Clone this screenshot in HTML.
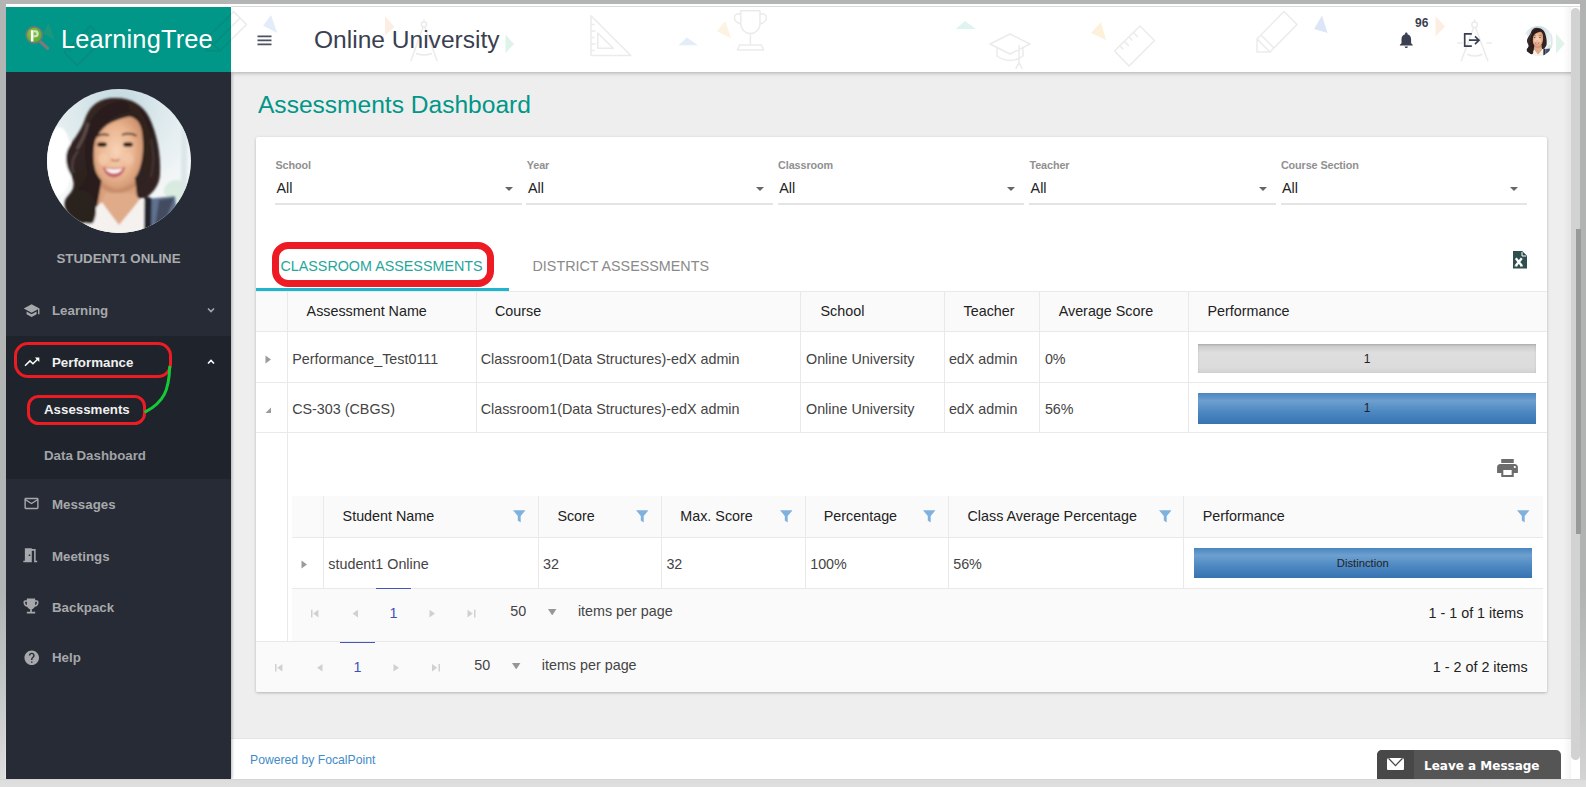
<!DOCTYPE html>
<html lang="en">
<head>
<meta charset="utf-8">
<title>Assessments Dashboard</title>
<style>
*{box-sizing:border-box;margin:0;padding:0}
html,body{width:1586px;height:787px;overflow:hidden;background:#eeeeee;font-family:"Liberation Sans",Arial,sans-serif}
body{position:relative}
.abs{position:absolute}
.bd{position:absolute;background:#b3b5b4;z-index:50}
/* sidebar */
#side{position:absolute;left:6px;top:72px;width:225px;height:707px;background:#272b35;box-shadow:1px 0 3px rgba(0,0,0,.28)}
#brand{position:absolute;left:6px;top:7px;width:225px;height:65px;background:#009688;overflow:hidden}
#brand .name{position:absolute;left:54.900px;top:16.700px;letter-spacing:.15px;font-size:25.4px;color:#fff;white-space:nowrap;line-height:30px}
#uname{position:absolute;left:6px;width:225px;top:251.100px;text-align:center;font-size:13.3px;font-weight:bold;color:#a9abae;line-height:16px}
.mi{position:absolute;left:52px;color:#a6a8ab;font-size:13.3px;font-weight:bold;line-height:16px;white-space:nowrap}
#sub{position:absolute;left:6px;top:335.500px;width:225px;height:143px;background:#1f232b}
.smi{position:absolute;left:44px;font-size:13.3px;font-weight:bold;color:#a2a4a8;line-height:16px;white-space:nowrap}
/* top bar */
#top{position:absolute;left:231px;top:4px;width:1349px;height:68px;background:#fff;box-shadow:0 1px 4px rgba(0,0,0,.28);overflow:hidden}
#toptitle{position:absolute;left:314px;top:24.5px;font-size:24.55px;color:#3a3f51;line-height:30px;white-space:nowrap}
#ptitle{position:absolute;left:258px;top:89.5px;font-size:24.55px;color:#009688;line-height:30px;white-space:nowrap}
/* card */
#card{position:absolute;left:256px;top:137px;width:1290.500px;height:555px;background:#fff;box-shadow:0 1px 3px rgba(0,0,0,.25);border-radius:2px}
.flab{position:absolute;top:157.600px;font-size:10.8px;font-weight:bold;color:#909090;line-height:14px;letter-spacing:-.1px}
.fval{position:absolute;top:179.3px;font-size:14.33px;color:#222;line-height:18px}
.fline{position:absolute;top:203px;height:2px;width:246.5px;background:#e4e4e4}
.farr{position:absolute;top:187px;width:0;height:0;border-left:4.5px solid transparent;border-right:4.5px solid transparent;border-top:4.5px solid #666}
.tab{position:absolute;top:256.9px;font-size:14.33px;line-height:18px;white-space:nowrap}
/* grid */
.g{position:absolute;font-size:14.33px;color:#444;line-height:18px;white-space:nowrap}
.gh{position:absolute;font-size:14.33px;color:#222;line-height:18px;white-space:nowrap}
.vl{position:absolute;width:1px;background:#e9e9e9}
.hl{position:absolute;height:1px;background:#e9e9e9}
.hbg{position:absolute;background:#fafafa}
.bar{position:absolute;text-align:center;font-size:11.25px;line-height:30px;color:#222}
.bar.blue{background:linear-gradient(#4a86c0 0%,#6da0cf 25%,#4d88c2 60%,#3773b0 100%)}
.bar.grey{background:linear-gradient(#c6c6c6 0%,#dedede 30%,#dcdcdc 80%,#d2d2d2 100%);box-shadow:inset 0 1px 2px rgba(0,0,0,.15)}
.pg{position:absolute;font-size:14.33px;color:#444;line-height:18px;white-space:nowrap}
#foot{position:absolute;left:231px;top:738px;width:1349px;height:41px;background:#fff;border-top:1px solid #e4e4e4}
#foot span{position:absolute;left:19px;top:13.500px;font-size:12.2px;color:#428bca;line-height:14px}
#lam{position:absolute;left:1377px;top:750px;width:184px;height:29px;background:#555;border-radius:5px 5px 0 0;overflow:hidden}
#lam i{position:absolute;left:0;top:0;width:37px;height:29px;background:#484848}
#lam span{position:absolute;left:47px;top:7.500px;font-family:"DejaVu Sans","Liberation Sans",sans-serif;font-weight:bold;font-size:12px;color:#fff;line-height:16px;white-space:nowrap}
</style>
</head>
<body>
<!-- CONTENT -->
<div id="ptitle">Assessments Dashboard</div>
<div id="card"></div>
<!--CARD-CONTENT-->
<!-- filters -->
<div class="flab" style="left:275.4px">School</div><div class="fval" style="left:276.5px">All</div><div class="fline" style="left:275.0px"></div><div class="farr" style="left:504.7px"></div>
<div class="flab" style="left:526.8px">Year</div><div class="fval" style="left:527.9px">All</div><div class="fline" style="left:526.4px"></div><div class="farr" style="left:756.1px"></div>
<div class="flab" style="left:778.1px">Classroom</div><div class="fval" style="left:779.2px">All</div><div class="fline" style="left:777.7px"></div><div class="farr" style="left:1007.4px"></div>
<div class="flab" style="left:1029.5px">Teacher</div><div class="fval" style="left:1030.6px">All</div><div class="fline" style="left:1029.1px"></div><div class="farr" style="left:1258.8px"></div>
<div class="flab" style="left:1280.9px">Course Section</div><div class="fval" style="left:1282.0px">All</div><div class="fline" style="left:1280.5px"></div><div class="farr" style="left:1510.2px"></div>
<!-- tabs -->
<div class="tab" style="left:280.4px;color:#26a69a">CLASSROOM ASSESSMENTS</div>
<div class="tab" style="left:532.5px;color:#8a8a8a">DISTRICT ASSESSMENTS</div>
<div class="abs" style="left:256px;top:287.5px;width:252.5px;height:3px;background:#1fb5cf"></div>
<div class="abs" style="left:272.2px;top:242px;width:221.4px;height:45px;border:7px solid #ed1c24;border-radius:16px"></div>
<!-- excel icon -->
<svg class="abs" style="left:1513px;top:251px" width="14" height="17.5" viewBox="0 0 14 17.500"><path d="M0 0 H9.200 L14 4.800 V17.500 H0 Z" fill="#2f4f4f"/><path d="M9 1 V5 H13.200" stroke="#fff" stroke-width="1" fill="none"/><path d="M2.800 7.200 L8.800 14.800 M8.800 7.200 L2.800 14.800" stroke="#fff" stroke-width="2.300"/><path d="M1.600 14.900 H4.600 M7 14.900 H10" stroke="#fff" stroke-width="1"/></svg>
<!-- main grid -->
<div class="hbg" style="left:256px;top:290.5px;width:1290.500px;height:41px"></div>
<div class="hl" style="left:256px;top:290.5px;width:1290.500px"></div>
<div class="hl" style="left:256px;top:331px;width:1290.500px"></div>
<div class="hl" style="left:256px;top:381.5px;width:1290.500px"></div>
<div class="hl" style="left:256px;top:431.500px;width:1290.500px"></div>
<div class="vl" style="left:287px;top:291px;height:350px"></div>
<div class="vl" style="left:475.500px;top:291px;height:141px"></div>
<div class="vl" style="left:800px;top:291px;height:141px"></div>
<div class="vl" style="left:944px;top:291px;height:141px"></div>
<div class="vl" style="left:1039px;top:291px;height:141px"></div>
<div class="vl" style="left:1188px;top:291px;height:141px"></div>
<div class="gh" style="left:306.600px;top:301.700px">Assessment Name</div>
<div class="gh" style="left:495px;top:301.700px">Course</div>
<div class="gh" style="left:820.500px;top:301.700px">School</div>
<div class="gh" style="left:963.600px;top:301.700px">Teacher</div>
<div class="gh" style="left:1058.700px;top:301.700px">Average Score</div>
<div class="gh" style="left:1207.500px;top:301.700px">Performance</div>
<!-- row 1 -->
<svg class="abs" style="left:264.500px;top:354.500px" width="7" height="9" viewBox="0 0 7 9"><path d="M0.500 0.500 L6 4.500 L0.500 8.500 Z" fill="#9b9b9b"/></svg>
<div class="g" style="left:292.200px;top:349.700px">Performance_Test0111</div>
<div class="g" style="left:480.700px;top:349.700px">Classroom1(Data Structures)-edX admin</div>
<div class="g" style="left:806px;top:349.700px">Online University</div>
<div class="g" style="left:948.900px;top:349.700px">edX admin</div>
<div class="g" style="left:1044.900px;top:349.700px">0%</div>
<div class="bar grey" style="left:1198px;top:343.500px;width:338px;height:29.500px;font-size:12px">1</div>
<!-- row 2 -->
<svg class="abs" style="left:264.500px;top:407px" width="7" height="7" viewBox="0 0 7 7"><path d="M6 0.500 V6 H0.500 Z" fill="#9b9b9b"/></svg>
<div class="g" style="left:292.200px;top:399.900px">CS-303 (CBGS)</div>
<div class="g" style="left:480.700px;top:399.900px">Classroom1(Data Structures)-edX admin</div>
<div class="g" style="left:806px;top:399.900px">Online University</div>
<div class="g" style="left:948.900px;top:399.900px">edX admin</div>
<div class="g" style="left:1044.900px;top:399.900px">56%</div>
<div class="bar blue" style="left:1198px;top:393px;width:338px;height:30.500px;font-size:12px">1</div>
<!-- print icon -->
<svg class="abs" style="left:1495.300px;top:456.300px" width="25" height="24" viewBox="0 0 24 24" preserveAspectRatio="none"><path fill="#6c6c6c" d="M19 8H5c-1.660 0-3 1.340-3 3v6h4v4h12v-4h4v-6c0-1.660-1.340-3-3-3zm-3 11H8v-5h8v5zm3-7c-.55 0-1-.45-1-1s.45-1 1-1 1 .45 1 1-.45 1-1 1zm-1-9H6v4h12V3z"/></svg>
<!-- detail grid -->
<div class="hbg" style="left:292px;top:496px;width:1250.500px;height:41.500px"></div>
<div class="hbg" style="left:292px;top:588px;width:1250.500px;height:53px"></div>
<div class="hl" style="left:292px;top:537px;width:1250.500px"></div>
<div class="hl" style="left:292px;top:587.500px;width:1250.500px"></div>
<div class="vl" style="left:323px;top:496px;height:92px"></div>
<div class="vl" style="left:538px;top:496px;height:92px"></div>
<div class="vl" style="left:661px;top:496px;height:92px"></div>
<div class="vl" style="left:804.500px;top:496px;height:92px"></div>
<div class="vl" style="left:948px;top:496px;height:92px"></div>
<div class="vl" style="left:1183px;top:496px;height:92px"></div>
<div class="gh" style="left:342.600px;top:507px">Student Name</div>
<div class="gh" style="left:557.400px;top:507px">Score</div>
<div class="gh" style="left:680.300px;top:507px">Max. Score</div>
<div class="gh" style="left:823.800px;top:507px">Percentage</div>
<div class="gh" style="left:967.500px;top:507px">Class Average Percentage</div>
<div class="gh" style="left:1202.800px;top:507px">Performance</div>
<svg width="0" height="0" style="position:absolute"><defs><symbol id="flt" viewBox="0 0 12.500 12.500"><path d="M0 0.300 H12.500 L7.700 6 V12.500 L4.800 10.600 V6 Z" fill="#7fb1df"/></symbol></defs></svg>
<svg class="abs" style="left:513px;top:510.200px" width="12.500" height="12.500"><use href="#flt"/></svg>
<svg class="abs" style="left:636px;top:510.200px" width="12.500" height="12.500"><use href="#flt"/></svg>
<svg class="abs" style="left:779.500px;top:510.200px" width="12.500" height="12.500"><use href="#flt"/></svg>
<svg class="abs" style="left:923px;top:510.200px" width="12.500" height="12.500"><use href="#flt"/></svg>
<svg class="abs" style="left:1158.700px;top:510.200px" width="12.500" height="12.500"><use href="#flt"/></svg>
<svg class="abs" style="left:1517.200px;top:510.200px" width="12.500" height="12.500"><use href="#flt"/></svg>
<svg class="abs" style="left:300.500px;top:559.500px" width="7" height="9" viewBox="0 0 7 9"><path d="M0.500 0.500 L6 4.500 L0.500 8.500 Z" fill="#9b9b9b"/></svg>
<div class="g" style="left:328.300px;top:554.500px">student1 Online</div>
<div class="g" style="left:543px;top:554.500px">32</div>
<div class="g" style="left:666.400px;top:554.500px">32</div>
<div class="g" style="left:810.200px;top:554.500px">100%</div>
<div class="g" style="left:953.200px;top:554.500px">56%</div>
<div class="bar blue" style="left:1194px;top:548px;width:337.500px;height:30px">Distinction</div>
<!-- pager 1 -->
<div class="abs" style="left:376.200px;top:587.500px;width:34.500px;height:1.600px;background:#4656b8"></div>
<div class="pg" style="left:376.200px;top:604.100px;width:34.500px;text-align:center;color:#3f51b5">1</div>
<svg class="abs" style="left:300px;top:600px" width="190" height="28" viewBox="300 600 190 28"><g fill="#d0d0d0"><path d="M311 609.800 h1.500 v7.600 h-1.500 Z M318.400 609.800 v7.600 l-5.200 -3.800 Z"/><path d="M358 609.800 v7.600 l-5.500 -3.800 Z"/><path d="M429.500 609.800 v7.600 l5.500 -3.800 Z"/><path d="M467.500 609.800 v7.600 l5.200 -3.800 Z M474 609.800 h1.500 v7.600 h-1.500 Z"/></g></svg>
<div class="pg" style="left:510.200px;top:601.800px">50</div>
<svg class="abs" style="left:548.400px;top:608.800px" width="8.400" height="6.400" viewBox="0 0 8.400 6.400"><path d="M0 0 H8.400 L4.200 6.400 Z" fill="#969696"/></svg>
<div class="pg" style="left:577.900px;top:601.800px">items per page</div>
<div class="pg" style="left:1323.300px;top:603.900px;width:200px;text-align:right;color:#222">1 - 1 of 1 items</div>
<!-- pager 2 -->
<div class="hbg" style="left:256px;top:641px;width:1290.500px;height:51px;border-radius:0 0 2px 2px"></div>
<div class="hl" style="left:256px;top:641px;width:1290.500px"></div>
<div class="abs" style="left:340px;top:641.500px;width:35px;height:1.600px;background:#4656b8"></div>
<div class="pg" style="left:340px;top:657.800px;width:35px;text-align:center;color:#3f51b5">1</div>
<svg class="abs" style="left:264px;top:654px" width="190" height="28" viewBox="264 654 190 28"><g fill="#d0d0d0"><path d="M275 663.900 h1.500 v7.600 h-1.500 Z M282.400 663.900 v7.600 l-5.200 -3.800 Z"/><path d="M322.500 663.900 v7.600 l-5.500 -3.800 Z"/><path d="M393.500 663.900 v7.600 l5.500 -3.800 Z"/><path d="M432 663.900 v7.600 l5.200 -3.800 Z M438.500 663.900 h1.500 v7.600 h-1.500 Z"/></g></svg>
<div class="pg" style="left:474.200px;top:656px">50</div>
<svg class="abs" style="left:512.300px;top:662.800px" width="8.400" height="6.400" viewBox="0 0 8.400 6.400"><path d="M0 0 H8.400 L4.200 6.400 Z" fill="#969696"/></svg>
<div class="pg" style="left:541.800px;top:656px">items per page</div>
<div class="pg" style="left:1327.600px;top:658px;width:200px;text-align:right;color:#222">1 - 2 of 2 items</div>
<!--/CARD-CONTENT-->
<div id="foot"><span>Powered by FocalPoint</span></div>
<div id="lam"><i></i><svg class="abs" style="left:9.800px;top:8px" width="17" height="12.400" viewBox="0 0 17 12.400"><rect width="17" height="12.400" rx="1.800" fill="#fff"/><path d="M1.500 0.300 L8.500 7.600 L15.500 0.300" fill="none" stroke="#484848" stroke-width="1.300"/></svg><span>Leave a Message</span></div>
<!-- TOP BAR -->
<div id="top"></div>
<!--TOP-CONTENT-->
<div class="abs" style="left:231px;top:6px;width:1349px;height:1px;background:#dcdcdc"></div>
<svg class="abs" style="left:6px;top:4px" width="1574" height="68" viewBox="6 4 1574 68" fill="none" stroke-linejoin="round" stroke-linecap="round">
  <!-- pastel triangles -->
  <polygon points="271,15.100 263.100,25.800 277.200,32.900" fill="#e3edf9"/>
  <polygon points="385,16 385,35.500 394.500,27" fill="#fdeee3"/>
  <polygon points="505.500,34.500 505.500,53 514,44" fill="#e0f3ea"/>
  <polygon points="686.800,37.600 678.500,45.300 698,45.300" fill="#e3edf8"/>
  <polygon points="725,21 717,31.200 731.500,38.500" fill="#fdf3e2"/>
  <polygon points="965,21 955.500,29 976,29" fill="#dff3f1"/>
  <polygon points="1101,22 1091,33 1106,40" fill="#fdf1da"/>
  <polygon points="1322,15.600 1314,29 1327.500,33" fill="#dde6f6"/>
  <polygon points="1435.500,16 1435.500,36.500 1445,26.500" fill="#fdeee4"/>
  <polygon points="1556,33.600 1556,53.800 1564.700,43.700" fill="#e0f3ea"/>
  <g stroke="#ebebeb" stroke-width="1.500">
    <!-- pencil crossing brand boundary (white side) -->
    <path d="M233.600,11.600 L246.500,24.500 L220.200,50.700 L206.500,50.700 L206.500,38.500 Z M240,18 L213.300,44.700"/>
    <!-- compass 1 -->
    <circle cx="424" cy="24.500" r="2.600"/><path d="M424,20 v2 M423,27.500 L411,60.500 M425,27.500 L437,60.500 M416.500,53.500 q7.500,3 15,0"/>
    <!-- set square -->
    <path d="M591,15.800 V55.500 H630.800 Z M597.800,33 V48.300 H613.300 Z M591,24.500 h3 M591,31 h4 M591,37.500 h3 M591,44 h4 M591,50.500 h3"/>
    <!-- trophy -->
    <path d="M740.800,10.800 H760 V24 a9.600,9.600 0 0 1 -19.200,0 Z M750.400,33.600 V45 M739.500,45 H761.500 L763.500,50 H737.400 Z M740.800,14 c-8,-2 -9,7 0,10 M760,14 c8,-2 9,7 0,10"/>
    <!-- grad cap -->
    <path d="M1010,34 L1030,44 L1010,54 L990,44 Z M997,48 v8 q13,9 26,0 v-8 M1019,45.500 v17 l-3,6 M1019,62.500 l3,6"/>
    <!-- ruler -->
    <path d="M1114.500,51 L1140,26 L1154.500,40.500 L1129,66 Z M1120,46 l3,3 M1124.500,41.500 l4,4 M1129,37 l3,3 M1133.500,32.500 l4,4"/>
    <!-- pencil 2 -->
    <path d="M1257,39 L1284,11.500 L1297,24.500 L1270,52 L1257,52 Z M1257,39 L1270,52 M1261,35 L1274,48"/>
    <!-- compass 2 -->
    <circle cx="1474.600" cy="24.800" r="2.800"/><path d="M1474.600,20 v2 M1473.500,28 L1461.300,60.700 M1475.700,28 L1487.800,60.700 M1457.500,43 h4.500 M1487,43 h4.500 M1467.600,54.500 q7,3 14.400,0"/>
  </g>
  <!-- hamburger -->
  <path d="M257.500,36.300 H271.500 M257.500,40.300 H271.500 M257.500,44.300 H271.500" stroke="#4d5162" stroke-width="1.700" stroke-linecap="butt"/>
  <!-- bell -->
  <g transform="translate(1396.700,30.400) scale(0.800)"><path fill="#3a3f51" d="M12 22c1.100 0 2-.9 2-2h-4c0 1.100.89 2 2 2zm6-6v-5c0-3.070-1.640-5.640-4.500-6.320V4c0-.83-.67-1.500-1.500-1.500s-1.500.67-1.500 1.500v.68C7.630 5.360 6 7.920 6 11v5l-2 2v1h16v-1l-2-2z"/></g>
  <!-- logout -->
  <path d="M1471.800,33.800 H1464.700 V46.200 H1471.800 M1469,40.200 H1478.800 M1475,36.300 L1479,40.200 L1475,44.100" stroke="#3a3f51" stroke-width="1.700" stroke-linejoin="miter" stroke-linecap="butt"/>
</svg>
<div class="abs" style="left:1415px;top:15.500px;font-size:12px;font-weight:bold;color:#3a3f51;line-height:15px">96</div>
<!--/TOP-CONTENT-->
<div id="toptitle">Online University</div>
<!-- SIDEBAR -->
<div class="abs" style="left:6px;top:4px;width:225px;height:3px;background:#fff"></div>
<div id="side"></div>
<div id="brand"><svg class="abs" style="left:0;top:0" width="225" height="65" viewBox="6 7 225 65" fill="none">
<polygon points="48.700,22.700 43,33.500 54.800,40.200" fill="#1a977d"/>
<g stroke="#0a8a7d" stroke-width="1.400" stroke-linejoin="round">
<path d="M90.300,26 L103.500,39.200 L77.300,65.400 L64.100,52.200 Z M85.800,30.500 l3,3 M81.300,35 l4.500,4.500 M76.800,39.500 l3,3 M72.300,44 l4.500,4.500 M67.800,48.500 l3,3"/>
<path d="M233.600,11.600 L246.500,24.500 L220.200,50.700 L206.500,50.700 L206.500,38.500 Z M240,18 L213.300,44.700 M206.500,38.500 L220.200,50.700"/>
</g>
<defs><radialGradient id="lg" cx="0.4" cy="0.35" r="0.7"><stop offset="0" stop-color="#86c440"/><stop offset="1" stop-color="#5aa632"/></radialGradient></defs>
<path d="M40.400,41.700 L47.700,48.200" stroke="#7a7a7c" stroke-width="3.200" stroke-linecap="round"/>
<circle cx="34.200" cy="35" r="8.100" fill="url(#lg)" stroke="#70787a" stroke-width="1.700"/>
<path d="M30.900,30.300 h2.500 v11.200 h-2.500 z" fill="#fff"/>
<path d="M33.400,30.300 h1.800 a3.500,3.500 0 0 1 0,7 h-1.800 v-2 h1.600 a1.500,1.500 0 0 0 0,-3 h-1.600 z" fill="#cfe8bf"/>
</svg><div class="name">LearningTree</div></div>
<div id="sub"></div>
<!--SIDE-CONTENT-->
<div class="mi" style="top:303.4px">Learning</div>
<svg class="abs" style="left:23.3px;top:301.6px" width="17.2" height="17.2" viewBox="0 0 24 24"><path fill="#a6a8ab" d="M5 13.18v4L12 21l7-3.82v-4L12 17l-7-3.82zM12 3L1 9l11 6 9-4.91V17h2V9L12 3z"/></svg>
<svg class="abs" style="left:206px;top:305px" width="10" height="10" viewBox="0 0 10 10"><path d="M2 3.5L5 6.5L8 3.5" fill="none" stroke="#a6a8ab" stroke-width="1.6"/></svg>
<div class="mi" style="top:354.800px;color:#f0f0f0">Performance</div>
<svg class="abs" style="left:22.800px;top:353px" width="17.800" height="17.800" viewBox="0 0 24 24"><path fill="#fff" d="M16 6l2.29 2.29-4.88 4.88-4-4L2 16.59 3.41 18l6-6 4 4 6.3-6.29L22 12V6z"/></svg>
<svg class="abs" style="left:206px;top:357px" width="10" height="10" viewBox="0 0 10 10"><path d="M2 6.5L5 3.5L8 6.5" fill="none" stroke="#fff" stroke-width="1.6"/></svg>
<div class="smi" style="top:402.400px;color:#f0f0f0">Assessments</div>
<div class="smi" style="top:448.1px">Data Dashboard</div>
<div class="mi" style="top:497.4px">Messages</div>
<svg class="abs" style="left:22.500px;top:495.300px" width="17" height="17" viewBox="0 0 24 24"><path fill="#a6a8ab" d="M20 4H4c-1.1 0-1.99.9-1.99 2L2 18c0 1.1.9 2 2 2h16c1.1 0 2-.9 2-2V6c0-1.1-.9-2-2-2zm0 14H4V8l8 5 8-5v10zm-8-7L4 6h16l-8 5z"/></svg>
<div class="mi" style="top:548.5px">Meetings</div>
<svg class="abs" style="left:21.300px;top:545.500px" width="18.500" height="18.500" viewBox="0 0 24 24"><path fill="#a6a8ab" d="M14 6v15H3v-2h2V3h9v1h5v15h2v2h-4V6h-3zm-4 5v2h2v-2h-2z"/></svg>
<div class="mi" style="top:599.7px">Backpack</div>
<svg class="abs" style="left:21.300px;top:596px" width="20" height="20" viewBox="0 0 24 24"><path fill="#a6a8ab" d="M19 5h-2V3H7v2H5c-1.1 0-2 .9-2 2v1c0 2.55 1.92 4.63 4.39 4.94.63 1.5 1.98 2.63 3.61 2.96V19H7v2h10v-2h-4v-3.1c1.63-.33 2.98-1.46 3.61-2.96C19.08 12.63 21 10.550 21 8V7c0-1.1-.9-2-2-2zM5 8V7h2v3.820C5.840 10.400 5 9.300 5 8zm14 0c0 1.300-.84 2.400-2 2.820V7h2v1z"/></svg>
<div class="mi" style="top:650.4px">Help</div>
<svg class="abs" style="left:22.500px;top:648.500px" width="17.500" height="17.500" viewBox="0 0 24 24"><path fill="#a6a8ab" d="M12 2C6.480 2 2 6.480 2 12s4.480 10 10 10 10-4.480 10-10S17.520 2 12 2zm1 17h-2v-2h2v2zm2.070-7.750l-.9.920C13.450 12.900 13 13.500 13 15h-2v-.5c0-1.100.45-2.100 1.170-2.830l1.240-1.260c.37-.36.590-.86.590-1.410 0-1.100-.9-2-2-2s-2 .9-2 2H8c0-2.210 1.790-4 4-4s4 1.790 4 4c0 .880-.36 1.680-.930 2.250z"/></svg>
<!-- annotations -->
<div class="abs" style="left:13.900px;top:342px;width:158.200px;height:36.200px;border:3.600px solid #ed1c24;border-radius:14px"></div>
<div class="abs" style="left:27px;top:394.600px;width:119px;height:30.700px;border:3.600px solid #ed1c24;border-radius:11.500px"></div>
<svg class="abs" style="left:140px;top:360px" width="36" height="58" viewBox="0 0 36 58"><path d="M29.700 7 C29 30 24 42 5.7 51.700" fill="none" stroke="#14cb35" stroke-width="3" stroke-linecap="round"/></svg>
<!--/SIDE-CONTENT-->
<!--AVATAR-->
<svg width="0" height="0" style="position:absolute">
  <defs>
    <radialGradient id="avbg" cx="0.5" cy="0.1" r="0.95">
      <stop offset="0" stop-color="#c2d8df"/><stop offset="0.3" stop-color="#dbe8ec"/><stop offset="0.65" stop-color="#f1f5f6"/><stop offset="1" stop-color="#fbfcfc"/>
    </radialGradient>
    <radialGradient id="avface" cx="0.46" cy="0.48" r="0.62">
      <stop offset="0" stop-color="#f8d3b6"/><stop offset="0.55" stop-color="#eab590"/><stop offset="1" stop-color="#c98c69"/>
    </radialGradient>
    <linearGradient id="avhair" x1="0" y1="0" x2="1" y2="1">
      <stop offset="0" stop-color="#3b2a27"/><stop offset="0.5" stop-color="#2a1e1d"/><stop offset="1" stop-color="#352725"/>
    </linearGradient>
    <filter id="avblur" x="-10%" y="-10%" width="120%" height="120%"><feGaussianBlur stdDeviation="0.9"/></filter>
    <clipPath id="avclip"><circle cx="72" cy="72" r="72"/></clipPath>
    <symbol id="avatar" viewBox="0 0 144 144">
      <g clip-path="url(#avclip)">
        <rect width="144" height="144" fill="url(#avbg)"/>
        <g filter="url(#avblur)">
          <ellipse cx="130" cy="102" rx="13" ry="11" fill="#cfe6d6" opacity=".7"/>
          <ellipse cx="12" cy="72" rx="13" ry="34" fill="#ffffff"/>
          <rect x="134" y="30" width="6" height="70" fill="#dde7ea"/>
          <!-- hair back -->
          <path fill="url(#avhair)" d="M69 9 C52 8 42 18 38 30 C34 42 28 48 22 58 C17 66 19 78 24 86 C28 94 28 100 20 108 C15 114 18 122 24 128 C30 134 40 136 48 132 L60 118 L100 108 C108 102 113 94 113 84 C114 66 110 44 102 28 C96 16 84 9 69 9 Z"/>
          <!-- neck -->
          <path fill="#d9a07c" d="M55 90 L88 90 L91 116 L72 134 L50 118 Z"/>
          <path fill="#b97f5f" d="M54 92 Q70 106 88 92 L88 98 Q70 110 55 99 Z" opacity=".55"/>
          <!-- shirt -->
          <path fill="#f5f1ef" d="M38 128 L55 113 L72 136 L93 110 L104 115 L104 146 L38 146 Z"/>
          <path fill="#e0ab88" d="M55 113 L72 136 L93 110 L86 104 L58 104 Z"/>
          <!-- jacket -->
          <path fill="#60718f" d="M100 110 L128 107 L131 132 L102 148 Z"/>
          <path fill="#22242b" d="M97.500 107 L104.500 109 L104 148 L97 148 Z"/>
          <path fill="#333947" d="M112 111 L127 109 L119 130 L108 137 Z" opacity=".65"/>
          <!-- hair over left shoulder -->
          <path fill="#2c201e" d="M24 104 C30 98 40 100 46 108 C50 116 50 126 46 134 C38 136 28 132 22 124 C18 116 20 108 24 104 Z"/>
          <!-- face -->
          <path fill="url(#avface)" d="M48 52 C50 46 54 41 60 36 C66 32 74 29.500 82 27.500 C87 28 91 31 93.500 37 C95.500 42 96 50 96 58 C96 68 94 78 90 86 C85 94 77 100 70 100 C62 100 53 92 49 83 C46 74 46 62 48 52 Z"/>
          <!-- hair front -->
          <path fill="#2b1e1c" d="M84 22 C72 24 60 30 52 41 C47 47 46 56 45 66 C44 74 43 80 41 86 C38 72 37 56 40 42 C44 26 58 13 74 12 C78 12 81 14 83 17 Z"/>
          <path fill="#33231f" d="M82 20 C88 23 93 29 96 38 C98 48 99 60 98 72 C98 78 99 84 102 90 C106 76 106 52 100 36 C96 24 90 16 82 13 Z"/>
          <path d="M30 60 C35 52 39 44 41 34" stroke="#6d605e" stroke-width="3" fill="none" opacity=".7"/>
          <path d="M26 84 C24 76 26 68 31 62" stroke="#5f5351" stroke-width="2.500" fill="none" opacity=".6"/>
          <path d="M104 50 C107 62 107 76 104 88" stroke="#55494a" stroke-width="2" fill="none" opacity=".5"/>
          <!-- brows, eyes -->
          <path d="M49 47.500 q6 -3.500 13 -1.200" stroke="#3a2620" stroke-width="1.700" fill="none"/>
          <path d="M75 46 q7 -3 14.500 0.800" stroke="#3a2620" stroke-width="1.700" fill="none"/>
          <ellipse cx="55" cy="55.500" rx="5" ry="2.300" fill="#2a1a18"/>
          <ellipse cx="81" cy="55.500" rx="5" ry="2.300" fill="#2a1a18"/>
          <!-- nose shadow -->
          <path d="M64 70.500 q4 2.500 8.500 0" stroke="#bd7c5c" stroke-width="1.600" fill="none"/>
          <ellipse cx="56" cy="70" rx="5" ry="6" fill="#f7d3b8" opacity=".5"/><ellipse cx="82" cy="70" rx="5" ry="6" fill="#f7d3b8" opacity=".4"/>
          <!-- mouth -->
          <path fill="#c55e69" d="M55.500 78 Q66.500 80.500 78.500 78 Q75 88.500 67 88.500 Q59 88.500 55.500 78 Z"/>
          <path fill="#fcf5f1" d="M58 79.200 Q67 81.500 76 79.200 Q72.500 84.500 67 84.500 Q61.500 84.500 58 79.200 Z"/>
        </g>
      </g>
    </symbol>
  </defs>
</svg>
<svg class="abs" style="left:46.500px;top:88.500px" width="144" height="144"><use href="#avatar"/></svg>
<svg class="abs" style="left:1522.600px;top:25.500px" width="30.200" height="30.200"><use href="#avatar"/></svg>
<!--/AVATAR-->
<div id="uname">STUDENT1 ONLINE</div>
<!-- SCROLLBAR -->
<div class="abs" style="left:1563px;top:7px;width:8px;height:772px;background:linear-gradient(90deg,rgba(0,0,0,0),rgba(0,0,0,.045))"></div>
<div class="abs" style="left:1571px;top:8px;width:9px;height:752px;background:#d2d2d2;border-radius:5px"></div>
<div class="abs" style="left:1576px;top:229px;width:4.600px;height:305px;background:#999;z-index:60"></div>
<!-- OUTER BORDER -->
<div class="bd" style="left:0;top:0;width:1586px;height:4px"></div>
<div class="bd" style="left:0;top:0;width:6px;height:787px;background:linear-gradient(to bottom,#b3b5b4 0,#b3b5b4 590px,#c6c8c7 690px,#dcdddc 779px)"></div>
<div class="bd" style="left:5px;top:700px;width:1px;height:79px;background:linear-gradient(to bottom,rgba(255,255,255,0),rgba(255,255,255,.35))"></div>
<div class="bd" style="left:1580px;top:0;width:6px;height:787px;background:linear-gradient(to bottom,#b1b3b2 0,#b1b3b2 590px,#c2c4c3 690px,#d2d3d2 779px)"></div>
<div class="bd" style="left:0;top:779px;width:1586px;height:8px;background:linear-gradient(to bottom,#cfd0cf 0,#dcdddc 1.500px,#dedfde 100%)"></div>
</body>
</html>
